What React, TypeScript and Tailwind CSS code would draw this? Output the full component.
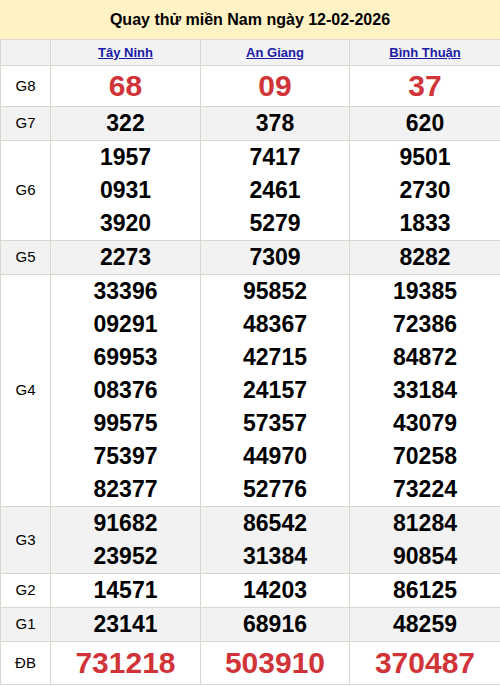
import React from 'react';

type Row = { label: string; values: string[][]; red?: boolean; gray?: boolean; h: string };

const provinces = ['Tây Ninh', 'An Giang', 'Bình Thuận'];

const rows: Row[] = [
  { label: 'G8', values: [['68'], ['09'], ['37']], red: true, h: 'h-[40px]' },
  { label: 'G7', values: [['322'], ['378'], ['620']], gray: true, h: 'h-[33px]' },
  {
    label: 'G6',
    values: [
      ['1957', '0931', '3920'],
      ['7417', '2461', '5279'],
      ['9501', '2730', '1833'],
    ],
    h: '',
  },
  { label: 'G5', values: [['2273'], ['7309'], ['8282']], gray: true, h: '' },
  {
    label: 'G4',
    values: [
      ['33396', '09291', '69953', '08376', '99575', '75397', '82377'],
      ['95852', '48367', '42715', '24157', '57357', '44970', '52776'],
      ['19385', '72386', '84872', '33184', '43079', '70258', '73224'],
    ],
    h: '',
  },
  {
    label: 'G3',
    values: [
      ['91682', '23952'],
      ['86542', '31384'],
      ['81284', '90854'],
    ],
    gray: true,
    h: '',
  },
  { label: 'G2', values: [['14571'], ['14203'], ['86125']], h: '' },
  { label: 'G1', values: [['23141'], ['68916'], ['48259']], gray: true, h: '' },
  { label: 'ĐB', values: [['731218'], ['503910'], ['370487']], red: true, h: 'h-[43px]' },
];

const App: React.FC = () => {
  return (
    <div className="w-[500px] bg-white font-['Liberation_Sans',Arial,sans-serif] text-black">
      <div className="h-[39px] bg-[#fff2c4] flex items-center justify-center text-[16px] font-bold">
        Quay thử miền Nam ngày 12-02-2026
      </div>
      <table className="w-[500px] table-fixed border-collapse">
        <colgroup>
          <col className="w-[50px]" />
          <col className="w-[150px]" />
          <col className="w-[149px]" />
          <col className="w-[151px]" />
        </colgroup>
        <thead>
          <tr className="bg-[#f2f2f2] h-[26px]">
            <th className="border border-[#ddd6ce]"></th>
            {provinces.map((p) => (
              <th key={p} className="border border-[#ddd6ce] text-[13px] font-bold">
                <a href="#" className="text-[#1a1aa6] underline">
                  {p}
                </a>
              </th>
            ))}
          </tr>
        </thead>
        <tbody>
          {rows.map((row) => (
            <tr key={row.label} className={(row.gray ? 'bg-[#f2f2f2] ' : 'bg-white ') + row.h}>
              <td className="border border-[#ddd6ce] text-center text-[15px] font-normal">{row.label}</td>
              {row.values.map((vals, i) => (
                <td key={i} className="border border-[#ddd6ce] text-center p-0">
                  {vals.map((v, j) => (
                    <div
                      key={j}
                      className={
                        row.red
                          ? 'text-[#d13438] font-bold text-[30px] leading-[40px]'
                          : 'font-bold text-[23px] leading-[33px]'
                      }
                    >
                      {v}
                    </div>
                  ))}
                </td>
              ))}
            </tr>
          ))}
        </tbody>
      </table>
    </div>
  );
};

export default App;
